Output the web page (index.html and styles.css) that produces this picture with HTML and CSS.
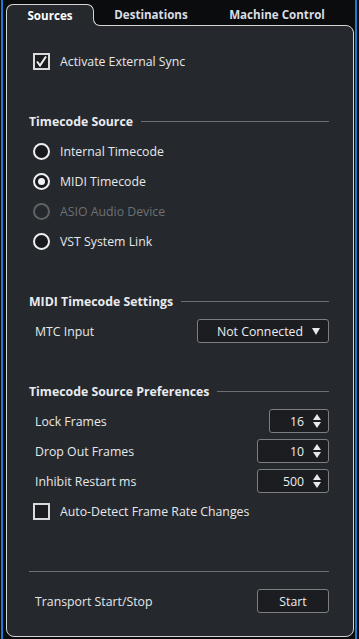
FILE: index.html
```html
<!DOCTYPE html>
<html lang="en">
  <head>
    <meta charset="UTF-8" />
    <meta name="viewport" content="width=device-width, initial-scale=1.0" />
    <title>Project Synchronization Setup</title>
    <link rel="stylesheet" href="styles.css">
  </head>
  <body>
    <div class="frame">
      <div class="tabs">
        <div class="tab active">Sources</div>
        <div class="tab tab-dest">Destinations</div>
        <div class="tab tab-machine">Machine Control</div>
      </div>

      <div class="panel">
        <div class="row">
          <span class="check checked">
            <svg viewBox="0 0 13 13" width="13" height="13">
              <path d="M2 6.5 L5 10.5 L11 1.5" fill="none" stroke="#f0f0f0" stroke-width="2" />
            </svg>
          </span>
          <span class="label">Activate External Sync</span>
        </div>

        <div class="section">
          <h3 class="heading">Timecode Source</h3>
          <div class="row">
            <span class="radio"></span>
            <span class="label">Internal Timecode</span>
          </div>
          <div class="row">
            <span class="radio selected"></span>
            <span class="label">MIDI Timecode</span>
          </div>
          <div class="row disabled">
            <span class="radio"></span>
            <span class="label">ASIO Audio Device</span>
          </div>
          <div class="row">
            <span class="radio"></span>
            <span class="label">VST System Link</span>
          </div>
        </div>

        <div class="section">
          <h3 class="heading">MIDI Timecode Settings</h3>
          <div class="row field">
            <span class="field-label">MTC Input</span>
            <div class="select">Not Connected <span class="caret"></span></div>
          </div>
        </div>

        <div class="section">
          <h3 class="heading">Timecode Source Preferences</h3>
          <div class="row field">
            <span class="field-label">Lock Frames</span>
            <div class="spin spin-small">16 <span class="arrows"><i class="up"></i><i class="down"></i></span></div>
          </div>
          <div class="row field">
            <span class="field-label">Drop Out Frames</span>
            <div class="spin">10 <span class="arrows"><i class="up"></i><i class="down"></i></span></div>
          </div>
          <div class="row field">
            <span class="field-label">Inhibit Restart ms</span>
            <div class="spin">500 <span class="arrows"><i class="up"></i><i class="down"></i></span></div>
          </div>
          <div class="row">
            <span class="check"></span>
            <span class="label">Auto-Detect Frame Rate Changes</span>
          </div>
        </div>

        <div class="section">
          <div class="row"><div class="divider"></div></div>
          <div class="row field">
            <span class="field-label">Transport Start/Stop</span>
            <button class="button">Start</button>
          </div>
        </div>
      </div>
    </div>
  </body>
</html>
```

FILE: styles.css
```css
/* General Reset */
* {
  margin: 0;
  padding: 0;
  box-sizing: border-box;
}

body {
  font-family: "Open Sans", "Noto Sans", sans-serif;
  font-size: 12.3px;
  color: #e6e8eb;
  background-color: #0b0c0d;
  width: 359px;
  height: 639px;
  overflow: hidden;
}

.frame {
  margin-left: 1px;
  width: 356px;
  height: 639px;
  border-left: 2px solid #1f78d1;
  border-right: 2px solid #1f78d1;
  padding: 4px 1px 2px 3px;
  display: flex;
  flex-direction: column;
}

/* Tabs */
.tabs {
  display: flex;
  height: 21px;
}

.tab {
  font-size: 11.6px;
  font-weight: 700;
  color: #d8dde4;
  display: flex;
  align-items: center;
  justify-content: center;
  height: 21px;
}

.tab.active {
  width: 88px;
  color: #ffffff;
  background: #25282c;
  border: 1px solid #d6d6d6;
  border-bottom: none;
  border-radius: 7px 7px 0 0;
  height: 22px;
  position: relative;
  z-index: 1;
}

/* small curve where the tab meets the panel edge */
.tab.active::before,
.tab.active::after {
  content: "";
  position: absolute;
  left: 100%;
  bottom: 0;
  width: 8px;
  height: 8px;
}

.tab.active::before {
  background: #25282c;
}

.tab.active::after {
  background: #0b0c0d;
  border-left: 1px solid #d6d6d6;
  border-bottom: 1px solid #d6d6d6;
  border-bottom-left-radius: 7px;
}

.tab-dest {
  width: 114px;
}

.tab-machine {
  width: 138px;
}

/* Panel */
.panel {
  flex: 1;
  background: #25282c;
  border: 1px solid #d6d6d6;
  border-radius: 0 8px 8px 8px;
  padding: 20px 24px 0 22px;
}

.section {
  margin-top: 30px;
}

.row {
  height: 30px;
  display: flex;
  align-items: center;
  padding-left: 4px;
}

.heading {
  height: 30px;
  display: flex;
  align-items: center;
  font-size: 12.3px;
  font-weight: 700;
  color: #e8ebef;
}

.heading::after {
  content: "";
  flex: 1;
  height: 1px;
  background: #6c6f73;
  margin-left: 8px;
}

.label {
  margin-left: 10px;
}

.disabled {
  color: #6d7074;
}

/* Checkbox and radio */
.check {
  width: 17px;
  height: 17px;
  border: 2px solid #d9dadb;
  background: #1a1c1f;
  display: flex;
  align-items: center;
  justify-content: center;
}

.radio {
  width: 17px;
  height: 17px;
  border: 2px solid #eceef0;
  border-radius: 50%;
  background: #17191c;
  display: flex;
  align-items: center;
  justify-content: center;
}

.radio.selected::after {
  content: "";
  width: 7px;
  height: 7px;
  border-radius: 50%;
  background: #f0f2f4;
}

.disabled .radio {
  border-color: #5f6265;
  background: #25282c;
}

/* Fields */
.field {
  justify-content: space-between;
  padding-left: 6px;
}

.select,
.spin,
.button {
  height: 24px;
  background: #1b1d20;
  border: 1px solid #7b7e82;
  border-radius: 3px;
  color: #eceef0;
  display: flex;
  align-items: center;
  justify-content: flex-end;
  font-family: inherit;
  font-size: 12.3px;
}

.select {
  width: 132px;
  padding-right: 8px;
}

.caret {
  width: 0;
  height: 0;
  border-left: 4px solid transparent;
  border-right: 4px solid transparent;
  border-top: 7px solid #e6e8eb;
  margin-left: 9px;
}

.spin {
  width: 72px;
  padding-right: 7px;
}

.spin-small {
  width: 60px;
}

.arrows {
  display: flex;
  flex-direction: column;
  gap: 2px;
  margin-left: 9px;
}

.arrows i {
  width: 0;
  height: 0;
  border-left: 4px solid transparent;
  border-right: 4px solid transparent;
}

.arrows .up {
  border-bottom: 6px solid #e6e8eb;
}

.arrows .down {
  border-top: 6px solid #e6e8eb;
}

.button {
  width: 72px;
  justify-content: center;
}

.divider {
  flex: 1;
  height: 1px;
  background: #6c6f73;
  margin-left: -4px;
}
```
